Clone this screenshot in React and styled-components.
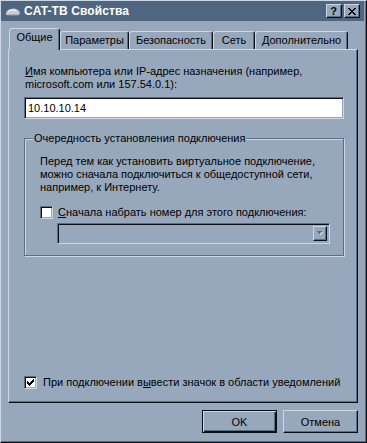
import React from "react";
import styled, { createGlobalStyle, css } from "styled-components";

const C = {
  face: "#98a8bc",
  light: "#cdd7e3",
  shadow: "#5d6d82",
  dark: "#0a0e16",
  title: "#4f6681",
};

const GlobalStyle = createGlobalStyle`
  html, body { margin: 0; padding: 0; background: ${C.face}; }
  body {
    font-family: "Liberation Sans", Arial, sans-serif;
    font-size: 11px;
    color: #000;
  }
  #root { width: 367px; height: 443px; }
  * { box-sizing: border-box; }
`;

const Window = styled.div`
  width: 367px;
  height: 443px;
  background: ${C.face};
  border-style: solid;
  border-width: 1px;
  border-color: ${C.light} ${C.dark} ${C.dark} ${C.light};
  box-shadow: inset -1px -1px 0 ${C.shadow};
  padding: 0 2px 2px 0;
  display: flex;
  flex-direction: column;
`;

const TitleBar = styled.div`
  height: 20px;
  background: ${C.title};
  display: flex;
  align-items: center;
  padding: 0 4px 0 4px;
  gap: 3px;
`;

const TitleText = styled.div`
  flex: 1;
  color: #fff;
  font-weight: bold;
  font-size: 12px;
  letter-spacing: 0.1px;
  white-space: nowrap;
`;

const CaptionButtons = styled.div`
  display: flex;
  gap: 2px;
`;

const CaptionButton = styled.div`
  width: 16px;
  height: 14px;
  background: ${C.face};
  border-style: solid;
  border-width: 1px;
  border-color: ${C.light} ${C.dark} ${C.dark} ${C.light};
  box-shadow: inset -1px -1px 0 ${C.shadow};
  display: flex;
  align-items: center;
  justify-content: center;
  font-weight: bold;
  font-size: 11px;
  line-height: 1;
  color: #000;
  padding-right: 1px;
`;

const Body = styled.div`
  flex: 1;
  display: flex;
  flex-direction: column;
  padding: 7px 6px 7px 7px;
`;

const Tabs = styled.div`
  display: flex;
  align-items: flex-end;
  height: 21px;
  padding-left: 3px;
  position: relative;
  z-index: 1;
`;

const Tab = styled.div`
  width: ${(p) => p.$w}px;
  height: 18px;
  background: ${C.face};
  border-style: solid;
  border-width: 1px 1px 0 1px;
  border-color: ${C.light} ${C.dark} ${C.face} ${C.light};
  border-radius: 3px 3px 0 0;
  box-shadow: inset -1px 0 0 ${C.shadow};
  text-align: center;
  line-height: 13px;
  padding-top: 2px;
  white-space: nowrap;
  ${(p) =>
    p.$active &&
    css`
      height: 22px;
      margin-left: -2px;
      margin-bottom: -1px;
      padding-top: 2px;
      position: relative;
    `}
`;

const Panel = styled.div`
  flex: 1;
  display: flex;
  flex-direction: column;
  border-style: solid;
  border-width: 1px;
  border-color: ${C.light} ${C.dark} ${C.dark} ${C.light};
  box-shadow: inset -1px -1px 0 ${C.shadow};
  padding: 15px 13px 13px 15px;
`;

const Label = styled.div`
  line-height: 13px;
  padding-left: 1px;
`;

const TextInput = styled.div`
  margin-top: 6px;
  height: 22px;
  background: #fff;
  border-style: solid;
  border-width: 1px;
  border-color: ${C.shadow} ${C.light} ${C.light} ${C.shadow};
  box-shadow: inset 1px 1px 0 ${C.dark}, inset -1px -1px 0 ${C.face};
  padding: 0 3px;
  display: flex;
  align-items: center;
  font-size: 11px;
`;

const Group = styled.div`
  margin-top: 19px;
  display: flex;
  flex-direction: column;
  border: 1px solid ${C.shadow};
  box-shadow: inset 1px 1px 0 ${C.light}, 1px 1px 0 ${C.light};
  padding: 0 13px 11px 15px;
`;

const GroupTitle = styled.div`
  align-self: flex-start;
  margin: -7px 0 0 -7px;
  padding: 0 1px;
  background: ${C.face};
  line-height: 13px;
`;

const Para = styled.div`
  margin-top: 10px;
  line-height: 13px;
`;

const CheckRow = styled.div`
  display: flex;
  align-items: center;
  gap: ${(p) => p.$gap}px;
  margin-top: ${(p) => p.$top};
  height: 13px;
  line-height: 13px;
`;

const Box = styled.div`
  width: 13px;
  height: 13px;
  flex: none;
  background: #fff;
  border-style: solid;
  border-width: 1px;
  border-color: ${C.shadow} ${C.light} ${C.light} ${C.shadow};
  box-shadow: inset 1px 1px 0 ${C.dark}, inset -1px -1px 0 ${C.face};
  display: flex;
  align-items: center;
  justify-content: center;
`;

const Combo = styled.div`
  margin: 4px 0 0 17px;
  height: 21px;
  background: ${C.face};
  border-style: solid;
  border-width: 1px;
  border-color: ${C.shadow} ${C.light} ${C.light} ${C.shadow};
  box-shadow: inset 1px 1px 0 ${C.dark}, inset -1px -1px 0 ${C.face};
  display: flex;
  justify-content: flex-end;
  padding: 2px;
`;

const ComboButton = styled.div`
  width: 14px;
  height: 15px;
  background: ${C.face};
  border-style: solid;
  border-width: 1px;
  border-color: ${C.light} ${C.dark} ${C.dark} ${C.light};
  box-shadow: inset -1px -1px 0 ${C.shadow};
  display: flex;
  align-items: center;
  justify-content: center;
`;

const Spacer = styled.div`
  flex: 1;
`;

const ButtonRow = styled.div`
  display: flex;
  justify-content: flex-end;
  gap: 6px;
  margin-top: 7px;
`;

const Button = styled.div`
  width: 75px;
  height: 23px;
  background: ${C.face};
  display: flex;
  align-items: center;
  justify-content: center;
  border-style: solid;
  border-width: 1px;
  border-color: ${C.light} ${C.dark} ${C.dark} ${C.light};
  box-shadow: inset -1px -1px 0 ${C.shadow};
  ${(p) =>
    p.$default &&
    css`
      border-color: ${C.dark};
      box-shadow: inset 1px 1px 0 ${C.light}, inset -1px -1px 0 ${C.dark},
        inset -2px -2px 0 ${C.shadow};
    `}
`;

const Check = () => (
  <svg width="7" height="7" viewBox="0 0 7 7" shapeRendering="crispEdges">
    <path
      d="M6 0h1v1h-1zM5 1h2v1h-2zM0 2h1v1h-1zM4 2h3v1h-3zM0 3h2v1h-2zM3 3h3v1h-3zM0 4h5v1h-5zM1 5h3v1h-3zM2 6h1v1h-1z"
      fill="#000"
    />
  </svg>
);

const ConnIcon = () => (
  <svg width="16" height="16" viewBox="0 0 16 16">
    <path
      d="M1 11 C1 8 4 6 7 6 C9 5 12 6 14 8 C15 9 15 11 14 12 L2 12 C1 12 1 11.5 1 11 Z"
      fill="#c9cfd6"
    />
    <path d="M3 8.5 C5 7 8 6.5 11 7.5" stroke="#f4f6f8" strokeWidth="1" fill="none" />
    <path d="M2 12 L14 12" stroke="#8d96a2" strokeWidth="1" />
  </svg>
);

const CloseGlyph = () => (
  <svg width="8" height="7" viewBox="0 0 8 7" shapeRendering="crispEdges">
    <path
      d="M0 0h2v1h-2zM6 0h2v1h-2zM1 1h2v1h-2zM5 1h2v1h-2zM2 2h4v1h-4zM3 3h2v1h-2zM2 4h4v1h-4zM1 5h2v1h-2zM5 5h2v1h-2zM0 6h2v1h-2zM6 6h2v1h-2z"
      fill="#000"
    />
  </svg>
);

const Arrow = () => (
  <svg width="7" height="5" viewBox="0 0 7 5" shapeRendering="crispEdges">
    <path d="M1 1h5v1h-5zM2 2h3v1h-3zM3 3h1v1h-1z" fill={C.light} />
    <path d="M0 0h5v1h-5zM1 1h3v1h-3zM2 2h1v1h-1z" fill={C.shadow} />
  </svg>
);

const tabs = [
  { label: "Общие", w: 51, active: true },
  { label: "Параметры", w: 69 },
  { label: "Безопасность", w: 84 },
  { label: "Сеть", w: 42 },
  { label: "Дополнительно", w: 93 },
];

export default function App() {
  return (
    <>
      <GlobalStyle />
      <Window>
        <TitleBar>
          <ConnIcon />
          <TitleText>CAT-TB Свойства</TitleText>
          <CaptionButtons>
            <CaptionButton>?</CaptionButton>
            <CaptionButton>
              <CloseGlyph />
            </CaptionButton>
          </CaptionButtons>
        </TitleBar>
        <Body>
          <Tabs>
            {tabs.map((t) => (
              <Tab key={t.label} $w={t.w} $active={t.active}>
                {t.label}
              </Tab>
            ))}
          </Tabs>
          <Panel>
            <Label>
              <u>И</u>мя компьютера или IP-адрес назначения (например,
              <br />
              microsoft.com или 157.54.0.1):
            </Label>
            <TextInput>10.10.10.14</TextInput>
            <Group>
              <GroupTitle>Очередность установления подключения</GroupTitle>
              <Para>
                Перед тем как установить виртуальное подключение,
                <br />
                можно сначала подключиться к общедоступной сети,
                <br />
                например, к Интернету.
              </Para>
              <CheckRow $gap={5} $top="12px">
                <Box />
                <span>
                  <u>С</u>начала набрать номер для этого подключения:
                </span>
              </CheckRow>
              <Combo>
                <ComboButton>
                  <Arrow />
                </ComboButton>
              </Combo>
            </Group>
            <Spacer />
            <CheckRow $gap={6} $top="0">
              <Box>
                <Check />
              </Box>
              <span>
                При подключении в<u>ы</u>вести значок в области уведомлений
              </span>
            </CheckRow>
          </Panel>
          <ButtonRow>
            <Button $default>OK</Button>
            <Button>Отмена</Button>
          </ButtonRow>
        </Body>
      </Window>
    </>
  );
}
